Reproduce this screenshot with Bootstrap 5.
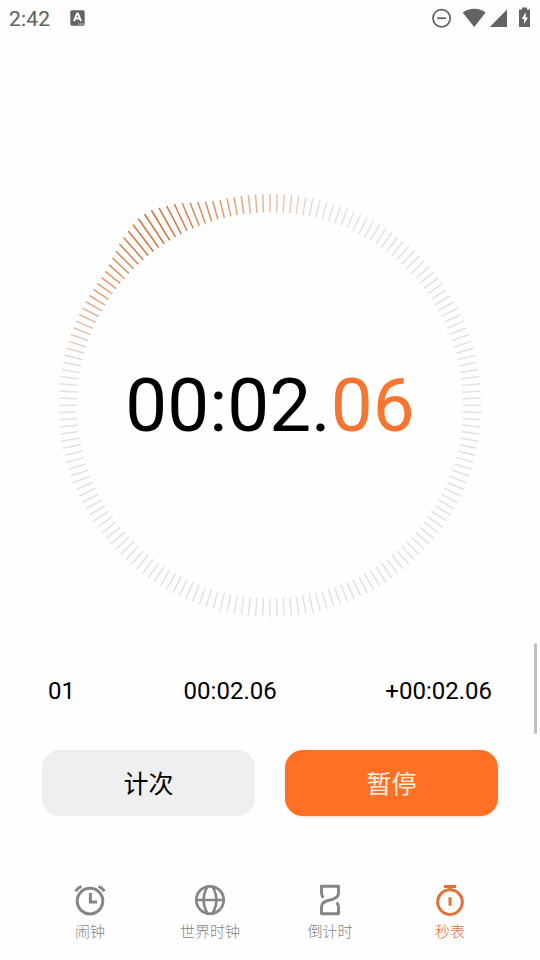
<!DOCTYPE html>
<html lang="zh-CN">
<head>
<meta charset="utf-8">
<meta name="viewport" content="width=device-width, initial-scale=1">
<title>秒表</title>
<link href="https://cdn.jsdelivr.net/npm/bootstrap@5.3.0/dist/css/bootstrap.min.css" rel="stylesheet">
<style>
  body { font-family: Roboto, "Noto Sans CJK SC", sans-serif; background: #fefefe; color: #000; }
  svg { display: block; }
  .screen { width: 540px; height: 960px; overflow: hidden; }
  .status-bar { height: 36px; padding: 0 10px 0 9px; color: #636363; }
  .clock-text { font-size: 21px; line-height: 36px; padding-top: 1px; letter-spacing: .15px; -webkit-text-stroke: .15px currentColor; }
  .dial { height: 480px; margin-top: 129px; }
  .readout { font-size: 74.6px; line-height: 90px; top: 241px; }
  .accent { color: #f67530; }
  .lap-area { height: 92px; margin-top: -2px; padding: 0 3px 0 48px; }
  .lap-row { width: 444px; font-size: 24px; line-height: 36px; padding-top: 4px; }
  .scroll-thumb { width: 3px; height: 91px; background: #c1c1c1; border-radius: 2px; }
  .actions { padding: 15px 42px 0; gap: 30px; }
  .action-btn { height: 66px; border: 0; border-radius: 18px; font-size: 25px; line-height: 66px; padding: 2px 0 0; }
  .btn-lap, .btn-lap:hover { background: #efeff1; color: #000; }
  .btn-pause, .btn-pause:hover { background: #ff7024; color: #fff1e4; box-shadow: 0 1px 2px rgba(255,112,36,.25); }
  .tab-bar { margin-top: 66px; padding: 0 30px; color: #858585; }
  .tab-bar a { font-size: 15px; line-height: 20px; font-weight: 300; color: inherit; padding: 0; }
  .tab-bar a.active { color: #e27038; }
  .tab-bar svg { width: 36px; height: 36px; margin-bottom: 4px; }
</style>
</head>
<body>
<main class="screen d-flex flex-column">
  <header class="status-bar d-flex align-items-center justify-content-between flex-shrink-0">
    <div class="d-flex align-items-center">
      <span class="clock-text">2:42</span>
      <svg class="ms-3" width="24" height="20" viewBox="0 0 24 20" aria-hidden="true">
        <rect x="4.3" y="2.3" width="14.4" height="15.4" rx="1.6" fill="#636363"/>
        <path d="M8 13.2 11 5.600h1l3 7.600M9.200 10.500h4.600" fill="none" stroke="#fff" stroke-width="1.9"/>
        <path d="M12.200 16h1.200m.9 0h1.200m.9 0h1.200" stroke="#fff" stroke-width="1"/>
      </svg>
    </div>
    <svg width="100" height="24" viewBox="430 6 100 24" aria-hidden="true">
      <circle cx="441.600" cy="18.200" r="8.600" fill="none" stroke="#636363" stroke-width="1.7"/>
      <path d="M437.200 18.200h8.800" stroke="#636363" stroke-width="1.8"/>
      <path d="M462.700 12.400c6.600-5 16.400-5 23 0L474.200 26.900z" fill="#636363"/>
      <path d="M507 9.400V27H489.800z" fill="#636363"/>
      <path d="M522 7.600h5v2h3V27h-11V9.600h3z" fill="#636363"/>
      <path d="m525.700 12.200-4 6.700h2.400v5.200l3.900-6.600h-2.300z" fill="#fff"/>
    </svg>
  </header>

  <section class="dial position-relative flex-shrink-0">
    <svg id="ring" width="540" height="480" viewBox="0 165 540 480" aria-hidden="true"></svg>
    <div class="readout position-absolute start-0 w-100 text-center translate-middle-y">00:02.<span class="accent">06</span></div>
  </section>

  <section class="lap-area d-flex justify-content-between flex-shrink-0">
    <div class="lap-row d-flex align-items-center justify-content-between">
      <span>01</span><span>00:02.06</span><span>+00:02.06</span>
    </div>
    <div class="scroll-thumb"></div>
  </section>

  <section class="actions d-flex flex-shrink-0">
    <button type="button" class="btn action-btn btn-lap flex-fill w-50">计次</button>
    <button type="button" class="btn action-btn btn-pause flex-fill w-50">暂停</button>
  </section>

  <nav class="tab-bar nav nav-fill flex-nowrap">
    <a class="nav-link w-25 d-flex flex-column align-items-center" href="#">
      <svg viewBox="0 0 36 36" fill="none" stroke="currentColor" stroke-width="3">
        <circle cx="18" cy="19.100" r="12.800"/>
        <path d="M18.400 11v8.900h6.600"/>
        <path d="M3.600 9.200C4.800 7 6.800 5.300 9.400 4.300M32.400 9.200C31.200 7 29.200 5.300 26.600 4.300"/>
      </svg>闹钟
    </a>
    <a class="nav-link w-25 d-flex flex-column align-items-center" href="#">
      <svg viewBox="0 0 36 36" fill="none" stroke="currentColor" stroke-width="2.700">
        <circle cx="18" cy="18" r="13.700"/>
        <path d="M4 18h28M15.500 4.500c-5 8.500-5 18.500 0 27M20.500 4.500c5 8.500 5 18.500 0 27" stroke-width="2.400"/>
      </svg>世界时钟
    </a>
    <a class="nav-link w-25 d-flex flex-column align-items-center" href="#">
      <svg viewBox="0 0 36 36" fill="none" stroke="currentColor" stroke-width="2.900" stroke-linejoin="round">
        <path d="M11.400 15.600C9.900 14.200 9.500 12.500 9.500 10.500V4.300h17v6.500c0 4.200-2.500 5.600-6.500 6.700l-4 1c-4 1.100-6.500 2.500-6.500 6.700v6.500h17v-6.200c0-2-.4-3.700-1.900-5.100"/>
      </svg>倒计时
    </a>
    <a class="nav-link active w-25 d-flex flex-column align-items-center" href="#">
      <svg viewBox="0 0 36 36" fill="none" stroke="currentColor" stroke-width="3">
        <circle cx="18" cy="20.100" r="12.300"/>
        <path d="M11.900 4.500h12.200M18 4.500V9M18 15.200v8.600"/>
      </svg>秒表
    </a>
  </nav>
</main>
<script src="https://cdn.jsdelivr.net/npm/bootstrap@5.3.0/dist/js/bootstrap.bundle.min.js"></script>
<script>
  // Ring of ticks; those close to the sweep position grow outward and warm up in colour.
  const ring = document.getElementById('ring');
  const COUNT = 184, CX = 270, CY = 405.3, INNER = 193, OUTER = 211.3, HEAD = 17;
  const growth = [17.4, 17, 15.3, 13.4, 11.4, 9.3, 6.5, 4.4, 2.3, 1];
  const cold = [226, 226, 226], warm = [226, 164, 122], hot = [205, 108, 52];
  const mix = (a, b, t) => a.map((c, k) => Math.round(c + (b[k] - c) * t));
  for (let i = 0; i < COUNT; i++) {
    const angle = -i * 2 * Math.PI / COUNT;
    const raw = Math.abs(i - HEAD), d = Math.min(raw, COUNT - raw);
    const outer = OUTER + (growth[d] || 0);
    const t = Math.max(0, 1 - d / 24);
    const rgb = t > .5 ? mix(warm, hot, t * 2 - 1) : mix(cold, warm, t * 2);
    const line = document.createElementNS('http://www.w3.org/2000/svg', 'line');
    line.setAttribute('x1', CX + INNER * Math.sin(angle));
    line.setAttribute('y1', CY - INNER * Math.cos(angle));
    line.setAttribute('x2', CX + outer * Math.sin(angle));
    line.setAttribute('y2', CY - outer * Math.cos(angle));
    line.setAttribute('stroke', `rgb(${rgb.join(',')})`);
    line.setAttribute('stroke-width', 1.5);
    ring.appendChild(line);
  }
</script>
</body>
</html>
